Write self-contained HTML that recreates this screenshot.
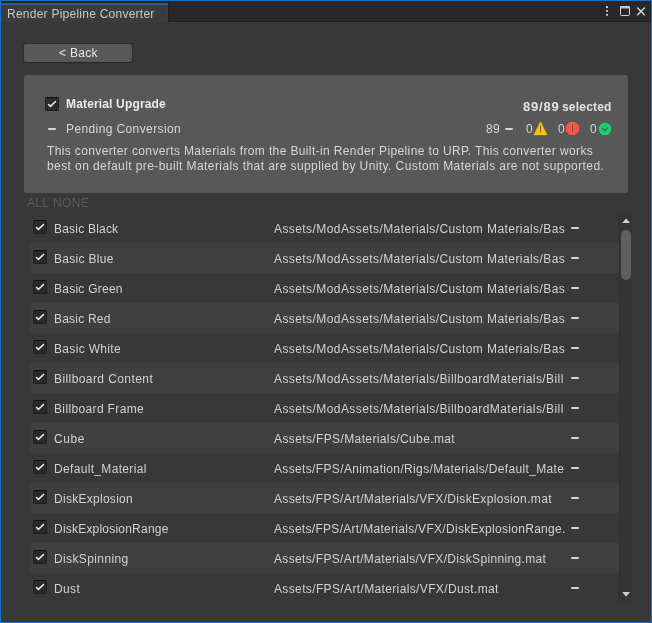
<!DOCTYPE html>
<html><head><meta charset="utf-8">
<style>
*{box-sizing:border-box;margin:0;padding:0}
html,body{width:652px;height:623px;overflow:hidden;background:#383838}
body{position:relative;font-family:"Liberation Sans",sans-serif;font-size:12px;color:#d2d2d2}
.a{position:absolute;white-space:nowrap}
.txt{line-height:1;will-change:transform}
#frame{position:absolute;left:0;top:0;width:652px;height:623px;border:1px solid #1773c6;z-index:50}
#hdr{position:absolute;left:0;top:0;width:652px;height:22px;background:#282828;border-bottom:1px solid #202020}
#hdrline{position:absolute;left:0;top:1px;width:652px;height:1px;background:#29241f}
#tab{position:absolute;left:1px;top:2px;width:168px;height:20px;background:#3c3c3c;border-top:1px solid #252321;border-right:1px solid #222;box-shadow:inset 0 2px 0 #2b5c8f,inset -1px 0 0 #404040;border-top-right-radius:2px}
#btn{position:absolute;left:23px;top:43px;width:110px;height:20px;background:#585858;border-radius:3px;border:1px solid #2e2e2e;border-bottom-color:#252525}
#panel{position:absolute;left:24px;top:75px;width:604px;height:118px;background:#585858;border-radius:2.5px}
.cb{position:absolute;width:14px;height:14px;background:#2a2a2a;border-radius:2px;border:1px solid #1f1f1f;border-top-color:#0f0f0f}
.cb svg{position:absolute;left:-1px;top:-1px}
.row{position:absolute;left:30px;width:589px;height:30px}
.row.odd{background:#3f3f3f}
.dash{position:absolute;height:2px;background:#d6d6d6;border-radius:1px}
</style></head><body>
<div id="hdr"></div>
<div id="hdrline"></div>
<div id="tab"></div>
<div class="a txt" style="left:7px;top:8px;letter-spacing:0.245px;color:#c8c8c8">Render Pipeline Converter</div>
<svg class="a" style="left:600px;top:3px" width="50" height="16" viewBox="600 3 50 16">
  <circle cx="607" cy="7.2" r="1.1" fill="#d8d8d8"/>
  <circle cx="607" cy="11" r="1.1" fill="#d8d8d8"/>
  <circle cx="607" cy="14.8" r="1.1" fill="#d8d8d8"/>
  <rect x="620" y="6" width="10" height="2.6" rx="1" fill="#bdbdbd"/>
  <rect x="620.5" y="6.5" width="9" height="9" rx="1" fill="none" stroke="#d0d0d0" stroke-width="1"/>
  <path d="M637.2 7.6 L644.8 15.2 M644.8 7.6 L637.2 15.2" stroke="#d8d8d8" stroke-width="1.4"/>
</svg>
<div id="btn"></div>
<div class="a txt" style="left:59px;top:47px;letter-spacing:0.300px;color:#e6e6e6">&lt; Back</div>
<div id="panel"></div>
<div class="cb" style="left:45px;top:97px"><svg width="14" height="14" viewBox="0 0 14 14"><path d="M3.5 7.5 L5.45 9.35 L10.5 4.5" fill="none" stroke="#ececec" stroke-width="1.5" stroke-linecap="round" stroke-linejoin="round"/></svg></div>
<div class="a txt" style="left:66px;top:98px;letter-spacing:0.157px;font-weight:bold;color:#ebebeb">Material Upgrade</div>
<div class="a txt" style="left:523px;top:99.5px;letter-spacing:0.800px;font-weight:bold;color:#e2e2e2;font-size:13px">89/89</div>
<div class="a txt" style="left:562px;top:101px;letter-spacing:0.200px;font-weight:bold;color:#e2e2e2">selected</div>
<div class="dash" style="left:48px;top:128px;width:8px"></div>
<div class="a txt" style="left:66px;top:123px;letter-spacing:0.390px;color:#d6d6d6">Pending Conversion</div>
<div class="a txt" style="left:486px;top:123px;color:#d6d6d6;letter-spacing:0.33px">89</div>
<div class="dash" style="left:505px;top:128px;width:8px"></div>
<div class="a txt" style="left:526px;top:123px;color:#d6d6d6">0</div>
<svg class="a" style="left:533px;top:121px" width="15" height="15" viewBox="0 0 15 15">
  <path d="M7.5 0.6 L14.1 13.9 L0.9 13.9 Z" fill="#ffc107" stroke="#ffc107" stroke-width="0.4" stroke-linejoin="round"/>
  <rect x="7.05" y="4.2" width="0.9" height="7.5" rx="0.45" fill="#585858"/>
</svg>
<div class="a txt" style="left:558px;top:123px;color:#d6d6d6">0</div>
<svg class="a" style="left:565px;top:121px" width="15" height="15" viewBox="0 0 15 15">
  <path d="M4.7 0.9 L10.2 0.9 L14 4.7 L14 10.1 L10.2 13.9 L4.7 13.9 L0.9 10.1 L0.9 4.7 Z" fill="#ff5447"/>
  <rect x="7.0" y="3.1" width="0.95" height="7.6" rx="0.45" fill="#585858"/>
</svg>
<div class="a txt" style="left:590px;top:123px;color:#d6d6d6">0</div>
<svg class="a" style="left:598px;top:122px" width="14" height="14" viewBox="0 0 14 14">
  <circle cx="7" cy="7" r="6.3" fill="#18cf69"/>
  <path d="M4.3 6.3 L6.8 8.8 L9.8 5.6" fill="none" stroke="#4d6655" stroke-width="1.4"/>
</svg>
<div class="a txt" style="left:46.5px;top:145px;letter-spacing:0.372px;color:#d6d6d6">This converter converts Materials from the Built-in Render Pipeline to URP. This converter works</div>
<div class="a txt" style="left:46.5px;top:159.5px;letter-spacing:0.416px;color:#d6d6d6">best on default pre-built Materials that are supplied by Unity. Custom Materials are not supported.</div>
<div class="a txt" style="left:27px;top:197px;letter-spacing:0.330px;color:#5c5c5c">ALL</div>
<div class="a txt" style="left:53px;top:197px;letter-spacing:0.330px;color:#5c5c5c">NONE</div>
<div class="row" style="top:213px"></div>
<div class="cb" style="left:33px;top:220px"><svg width="14" height="14" viewBox="0 0 14 14"><path d="M3.5 7.5 L5.45 9.35 L10.5 4.5" fill="none" stroke="#ececec" stroke-width="1.5" stroke-linecap="round" stroke-linejoin="round"/></svg></div>
<div class="a txt" style="left:54px;top:223px;letter-spacing:0.210px;color:#d2d2d2">Basic Black</div>
<div class="a txt" style="left:274px;top:223px;letter-spacing:0.421px;color:#d2d2d2">Assets/ModAssets/Materials/Custom Materials/Bas</div>
<div class="dash" style="left:571px;top:227px;width:8px"></div>
<div class="row odd" style="top:243px"></div>
<div class="cb" style="left:33px;top:250px"><svg width="14" height="14" viewBox="0 0 14 14"><path d="M3.5 7.5 L5.45 9.35 L10.5 4.5" fill="none" stroke="#ececec" stroke-width="1.5" stroke-linecap="round" stroke-linejoin="round"/></svg></div>
<div class="a txt" style="left:54px;top:253px;letter-spacing:0.308px;color:#d2d2d2">Basic Blue</div>
<div class="a txt" style="left:274px;top:253px;letter-spacing:0.421px;color:#d2d2d2">Assets/ModAssets/Materials/Custom Materials/Bas</div>
<div class="dash" style="left:571px;top:257px;width:8px"></div>
<div class="row" style="top:273px"></div>
<div class="cb" style="left:33px;top:280px"><svg width="14" height="14" viewBox="0 0 14 14"><path d="M3.5 7.5 L5.45 9.35 L10.5 4.5" fill="none" stroke="#ececec" stroke-width="1.5" stroke-linecap="round" stroke-linejoin="round"/></svg></div>
<div class="a txt" style="left:54px;top:283px;letter-spacing:0.250px;color:#d2d2d2">Basic Green</div>
<div class="a txt" style="left:274px;top:283px;letter-spacing:0.421px;color:#d2d2d2">Assets/ModAssets/Materials/Custom Materials/Bas</div>
<div class="dash" style="left:571px;top:287px;width:8px"></div>
<div class="row odd" style="top:303px"></div>
<div class="cb" style="left:33px;top:310px"><svg width="14" height="14" viewBox="0 0 14 14"><path d="M3.5 7.5 L5.45 9.35 L10.5 4.5" fill="none" stroke="#ececec" stroke-width="1.5" stroke-linecap="round" stroke-linejoin="round"/></svg></div>
<div class="a txt" style="left:54px;top:313px;letter-spacing:0.205px;color:#d2d2d2">Basic Red</div>
<div class="a txt" style="left:274px;top:313px;letter-spacing:0.421px;color:#d2d2d2">Assets/ModAssets/Materials/Custom Materials/Bas</div>
<div class="dash" style="left:571px;top:317px;width:8px"></div>
<div class="row" style="top:333px"></div>
<div class="cb" style="left:33px;top:340px"><svg width="14" height="14" viewBox="0 0 14 14"><path d="M3.5 7.5 L5.45 9.35 L10.5 4.5" fill="none" stroke="#ececec" stroke-width="1.5" stroke-linecap="round" stroke-linejoin="round"/></svg></div>
<div class="a txt" style="left:54px;top:343px;letter-spacing:0.330px;color:#d2d2d2">Basic White</div>
<div class="a txt" style="left:274px;top:343px;letter-spacing:0.421px;color:#d2d2d2">Assets/ModAssets/Materials/Custom Materials/Bas</div>
<div class="dash" style="left:571px;top:347px;width:8px"></div>
<div class="row odd" style="top:363px"></div>
<div class="cb" style="left:33px;top:370px"><svg width="14" height="14" viewBox="0 0 14 14"><path d="M3.5 7.5 L5.45 9.35 L10.5 4.5" fill="none" stroke="#ececec" stroke-width="1.5" stroke-linecap="round" stroke-linejoin="round"/></svg></div>
<div class="a txt" style="left:54px;top:373px;letter-spacing:0.417px;color:#d2d2d2">Billboard Content</div>
<div class="a txt" style="left:274px;top:373px;letter-spacing:0.420px;color:#d2d2d2">Assets/ModAssets/Materials/BillboardMaterials/Bill</div>
<div class="dash" style="left:571px;top:377px;width:8px"></div>
<div class="row" style="top:393px"></div>
<div class="cb" style="left:33px;top:400px"><svg width="14" height="14" viewBox="0 0 14 14"><path d="M3.5 7.5 L5.45 9.35 L10.5 4.5" fill="none" stroke="#ececec" stroke-width="1.5" stroke-linecap="round" stroke-linejoin="round"/></svg></div>
<div class="a txt" style="left:54px;top:403px;letter-spacing:0.359px;color:#d2d2d2">Billboard Frame</div>
<div class="a txt" style="left:274px;top:403px;letter-spacing:0.420px;color:#d2d2d2">Assets/ModAssets/Materials/BillboardMaterials/Bill</div>
<div class="dash" style="left:571px;top:407px;width:8px"></div>
<div class="row odd" style="top:423px"></div>
<div class="cb" style="left:33px;top:430px"><svg width="14" height="14" viewBox="0 0 14 14"><path d="M3.5 7.5 L5.45 9.35 L10.5 4.5" fill="none" stroke="#ececec" stroke-width="1.5" stroke-linecap="round" stroke-linejoin="round"/></svg></div>
<div class="a txt" style="left:54px;top:433px;letter-spacing:0.550px;color:#d2d2d2">Cube</div>
<div class="a txt" style="left:274px;top:433px;letter-spacing:0.380px;color:#d2d2d2">Assets/FPS/Materials/Cube.mat</div>
<div class="dash" style="left:571px;top:437px;width:8px"></div>
<div class="row" style="top:453px"></div>
<div class="cb" style="left:33px;top:460px"><svg width="14" height="14" viewBox="0 0 14 14"><path d="M3.5 7.5 L5.45 9.35 L10.5 4.5" fill="none" stroke="#ececec" stroke-width="1.5" stroke-linecap="round" stroke-linejoin="round"/></svg></div>
<div class="a txt" style="left:54px;top:463px;letter-spacing:0.330px;color:#d2d2d2">Default_Material</div>
<div class="a txt" style="left:274px;top:463px;letter-spacing:0.351px;color:#d2d2d2">Assets/FPS/Animation/Rigs/Materials/Default_Mate</div>
<div class="dash" style="left:571px;top:467px;width:8px"></div>
<div class="row odd" style="top:483px"></div>
<div class="cb" style="left:33px;top:490px"><svg width="14" height="14" viewBox="0 0 14 14"><path d="M3.5 7.5 L5.45 9.35 L10.5 4.5" fill="none" stroke="#ececec" stroke-width="1.5" stroke-linecap="round" stroke-linejoin="round"/></svg></div>
<div class="a txt" style="left:54px;top:493px;letter-spacing:0.280px;color:#d2d2d2">DiskExplosion</div>
<div class="a txt" style="left:274px;top:493px;letter-spacing:0.343px;color:#d2d2d2">Assets/FPS/Art/Materials/VFX/DiskExplosion.mat</div>
<div class="dash" style="left:571px;top:497px;width:8px"></div>
<div class="row" style="top:513px"></div>
<div class="cb" style="left:33px;top:520px"><svg width="14" height="14" viewBox="0 0 14 14"><path d="M3.5 7.5 L5.45 9.35 L10.5 4.5" fill="none" stroke="#ececec" stroke-width="1.5" stroke-linecap="round" stroke-linejoin="round"/></svg></div>
<div class="a txt" style="left:54px;top:523px;letter-spacing:0.212px;color:#d2d2d2">DiskExplosionRange</div>
<div class="a txt" style="left:274px;top:523px;letter-spacing:0.296px;color:#d2d2d2">Assets/FPS/Art/Materials/VFX/DiskExplosionRange.</div>
<div class="dash" style="left:571px;top:527px;width:8px"></div>
<div class="row odd" style="top:543px"></div>
<div class="cb" style="left:33px;top:550px"><svg width="14" height="14" viewBox="0 0 14 14"><path d="M3.5 7.5 L5.45 9.35 L10.5 4.5" fill="none" stroke="#ececec" stroke-width="1.5" stroke-linecap="round" stroke-linejoin="round"/></svg></div>
<div class="a txt" style="left:54px;top:553px;letter-spacing:0.385px;color:#d2d2d2">DiskSpinning</div>
<div class="a txt" style="left:274px;top:553px;letter-spacing:0.344px;color:#d2d2d2">Assets/FPS/Art/Materials/VFX/DiskSpinning.mat</div>
<div class="dash" style="left:571px;top:557px;width:8px"></div>
<div class="row" style="top:573px"></div>
<div class="cb" style="left:33px;top:580px"><svg width="14" height="14" viewBox="0 0 14 14"><path d="M3.5 7.5 L5.45 9.35 L10.5 4.5" fill="none" stroke="#ececec" stroke-width="1.5" stroke-linecap="round" stroke-linejoin="round"/></svg></div>
<div class="a txt" style="left:54px;top:583px;letter-spacing:0.350px;color:#d2d2d2">Dust</div>
<div class="a txt" style="left:274px;top:583px;letter-spacing:0.363px;color:#d2d2d2">Assets/FPS/Art/Materials/VFX/Dust.mat</div>
<div class="dash" style="left:571px;top:587px;width:8px"></div>
<div class="a" style="left:619px;top:213px;width:13px;height:389px;background:#353535;border-left:1px solid #303030"></div>
<svg class="a" style="left:619px;top:213px" width="13" height="389" viewBox="0 0 13 389">
  <path d="M3.1 10.1 L7.1 5.6 L11.1 10.1 Z" fill="#cfcfcf"/>
  <rect x="2" y="17" width="10" height="50" rx="5" fill="#5f5f5f"/>
  <path d="M3.1 379 L11.1 379 L7.1 383.4 Z" fill="#cfcfcf"/>
</svg>
<div id="frame"></div>
</body></html>
